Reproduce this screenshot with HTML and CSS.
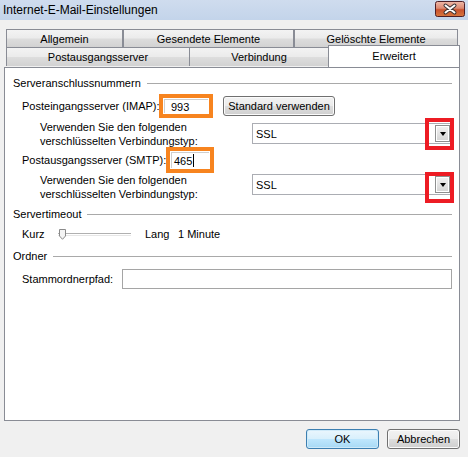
FILE: index.html
```html
<!DOCTYPE html>
<html lang="de">
<head>
    <meta charset="UTF-8">
    <title>Internet-E-Mail-Einstellungen</title>
    <link rel="stylesheet" href="styles.css">
</head>
<body>
<div class="window">
    <div class="titlebar">
        <span class="title">Internet-E-Mail-Einstellungen</span>
        <svg class="close" width="30" height="16" viewBox="0 0 30 16">
            <defs>
                <linearGradient id="cg" x1="0" y1="0" x2="0" y2="1">
                    <stop offset="0" stop-color="#efb9a9"/>
                    <stop offset="0.45" stop-color="#dc8a72"/>
                    <stop offset="0.55" stop-color="#c9522f"/>
                    <stop offset="1" stop-color="#d8783e"/>
                </linearGradient>
            </defs>
            <rect x="0.5" y="0.5" width="29" height="15" rx="2" fill="url(#cg)" stroke="#4d1f26"/>
            <path d="M10.5 4.5 L19.5 11.5 M19.5 4.5 L10.5 11.5" stroke="#3b3334" stroke-width="4" stroke-linecap="round"/>
            <path d="M10.5 4.5 L19.5 11.5 M19.5 4.5 L10.5 11.5" stroke="#fff" stroke-width="2" stroke-linecap="round"/>
        </svg>
    </div>

    <div class="tabs">
        <div class="tabrow row1">
            <div class="tab t-allg">Allgemein</div>
            <div class="tab t-ges">Gesendete Elemente</div>
            <div class="tab t-gel">Gelöschte Elemente</div>
        </div>
        <div class="tabrow row2">
            <div class="tab t-post">Postausgangsserver</div>
            <div class="tab t-verb">Verbindung</div>
            <div class="tab t-erw current">Erweitert</div>
        </div>
    </div>

    <div class="panel">
        <div class="group-head"><span>Serveranschlussnummern</span></div>

        <div class="row port-row imap">
            <span class="port-label">Posteingangsserver (IMAP):</span>
            <span class="mark mark-imap"><span class="field">993</span></span>
            <button class="btn btn-std">Standard verwenden</button>
        </div>
        <div class="row enc-row enc1">
            <div class="enc-label">Verwenden Sie den folgenden<br>verschlüsselten Verbindungstyp:</div>
            <div class="combo">
                <span>SSL</span>
                <span class="drop"></span>
                <span class="redmark"></span>
            </div>
        </div>

        <div class="row port-row smtp">
            <span class="port-label">Postausgangsserver (SMTP):</span>
            <span class="mark mark-smtp"><span class="field">465<i class="caret"></i></span></span>
        </div>
        <div class="row enc-row enc2">
            <div class="enc-label">Verwenden Sie den folgenden<br>verschlüsselten Verbindungstyp:</div>
            <div class="combo">
                <span>SSL</span>
                <span class="drop"></span>
                <span class="redmark"></span>
            </div>
        </div>

        <div class="group-head gh-timeout"><span>Servertimeout</span></div>
        <div class="row slider-row">
            <span class="s-kurz">Kurz</span>
            <span class="slider">
                <svg class="thumb" width="7" height="11" viewBox="0 0 7 11">
                    <path d="M0.5 0.5 H6.5 V7 L3.5 10.3 L0.5 7 Z" fill="#f4f4f4" stroke="#8a8a8a"/>
                </svg>
            </span>
            <span class="s-lang">Lang</span>
            <span>1 Minute</span>
        </div>

        <div class="group-head gh-ordner"><span>Ordner</span></div>
        <div class="row path-row">
            <span class="path-label">Stammordnerpfad:</span>
            <span class="path-field"></span>
        </div>
    </div>

    <div class="footer">
        <button class="btn btn-ok">OK</button>
        <button class="btn btn-cancel">Abbrechen</button>
    </div>
</div>
</body>
</html>
```

FILE: styles.css
```css
body{margin:0;background:#f0f0f0;font:11px/14px "Liberation Sans",Arial,sans-serif;color:#000;}
.window{width:468px;height:457px;overflow:hidden;}

/* titlebar */
.titlebar{height:20px;box-sizing:border-box;padding:0 3px 0 3px;display:flex;align-items:center;justify-content:space-between;background:linear-gradient(#cfdcee,#c3d4ea);}
.title{font-size:12px;line-height:16px;margin-top:-1px;}
.close{display:block;margin-top:-2px;}

/* tabs */
.tabs{margin:9px 0 0 6px;}
.tabrow{display:flex;align-items:flex-start;}
.tab{box-sizing:border-box;height:19px;border:1px solid #898c95;display:flex;align-items:center;justify-content:center;background:linear-gradient(#f3f3f3 0%,#ebebeb 48%,#dddddd 52%,#d2d2d2 100%);}
.row2{margin-top:-1px;}
.row2 .tab{border-bottom:none;}
.t-allg{width:117px;}
.t-ges{width:171px;}
.t-gel{width:164px;}
.t-post{width:184px;}
.t-verb{width:140px;margin-left:-1px;}
.tab.current{width:132px;height:22px;margin-top:-2px;margin-left:-1px;background:#fff;position:relative;z-index:1;align-items:flex-start;padding-top:3px;}

/* panel */
.panel{margin-left:4px;width:456px;height:354px;box-sizing:border-box;border:1px solid #898c95;background:#fff;padding:8px 7px 0 8px;}
.group-head{display:flex;align-items:center;height:14px;}
.group-head::after{content:"";flex:1;border-top:1px solid #a9a9a9;margin-left:6px;}
.row{display:flex;align-items:center;padding-left:9px;}

.imap{margin-top:4px;height:24px;}
.smtp{height:20px;}
.port-label{width:137px;flex:none;white-space:nowrap;}
.mark{box-sizing:border-box;border:4px solid #f7841f;flex:none;display:flex;padding:1px;}
.mark-imap{width:54px;height:24px;}
.mark-smtp{width:48px;height:26px;margin-left:7px;}
.field{flex:1;border-top:1px solid #cfcfcf;border-left:1px solid #cfcfcf;display:flex;align-items:center;padding-left:6px;}
.mark-smtp .field{padding-left:2px;}
.caret{display:inline-block;width:1px;height:13px;background:#000;margin-left:1px;}

.btn{font:11px "Liberation Sans",Arial,sans-serif;color:#000;box-sizing:border-box;height:20px;padding:0;border:1px solid #707070;border-radius:3px;background:linear-gradient(#f2f2f2 0%,#ebebeb 48%,#dddddd 52%,#cfcfcf 100%);box-shadow:inset 0 0 0 1px #fbfbfb;}
.btn-std{width:112px;margin-left:10px;}

.enc-row{padding-left:27px;}
.enc1{height:32px;}
.enc2{height:34px;}
.combo{margin-left:auto;width:200px;height:21px;box-sizing:border-box;border:1px solid #abadb3;align-self:flex-start;display:flex;align-items:center;padding:0 1px 0 3px;position:relative;}
.enc1 .combo{margin-top:5px;}
.enc2 .combo{margin-top:4px;}
.drop{margin-left:auto;width:15px;height:17px;box-sizing:border-box;border:1px solid #8e8f8f;box-shadow:inset 0 0 0 1px #fff;background:linear-gradient(#f2f2f2,#d4d4d4);display:flex;align-items:center;justify-content:center;}
.drop::after{content:"";border-left:3px solid transparent;border-right:3px solid transparent;border-top:4px solid #000;}
.redmark{position:absolute;box-sizing:border-box;border:4px solid #ed1c24;}
.enc1 .redmark{right:-3px;top:-6px;width:29px;height:32px;}
.enc2 .redmark{right:-3px;top:-3px;width:29px;height:31px;}

.gh-timeout{margin-top:3px;}
.slider-row{margin-top:4px;height:18px;}
.s-kurz{width:36px;}
.slider{width:73px;height:11px;position:relative;margin-right:14px;}
.slider::before{content:"";position:absolute;left:0;right:0;top:4px;height:1px;border-top:1px solid #b0b0b0;border-bottom:1px solid #e6e6e6;}
.thumb{position:absolute;left:1px;top:0;}
.s-lang{width:33px;}

.gh-ordner{margin-top:6px;}
.path-row{margin-top:6px;height:20px;}
.path-label{width:100px;flex:none;}
.path-field{flex:1;height:20px;box-sizing:border-box;border:1px solid #a5a5a5;}

/* footer */
.footer{display:flex;justify-content:flex-end;gap:8px;padding:8px 8px 0 0;}
.btn-ok,.btn-cancel{width:73px;}
.btn-ok{border-color:#3c7fb1;background:linear-gradient(#eaf6fd 0%,#d9f0fc 48%,#bee6fd 52%,#a7d9f5 100%);box-shadow:inset 0 0 0 1px #cfeaf9;}
```
